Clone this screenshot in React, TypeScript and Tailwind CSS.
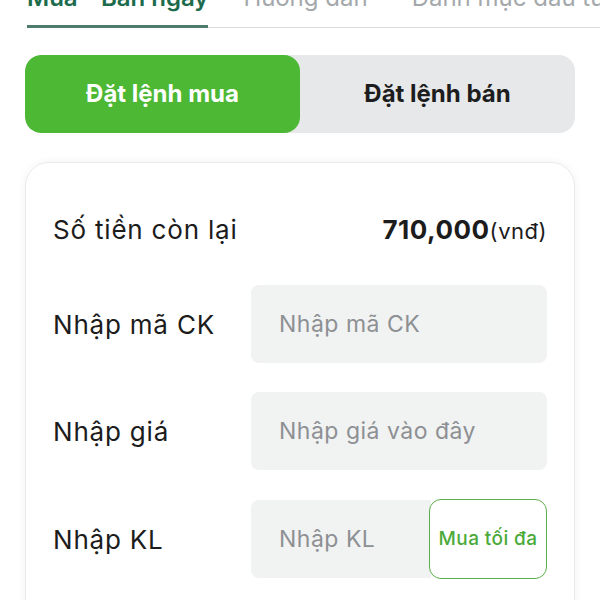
import React from "react";

export default function App() {
  return (
    <div className="w-[600px] h-[600px] overflow-hidden bg-white" style={{ fontFamily: "Inter, Roboto, sans-serif" }}>
      {/* tab bar */}
      <div className="mt-[-16px] ml-[27px] flex border-b border-[#dcdcdc] whitespace-nowrap">
        <div className="relative w-[185px] pb-[16px] text-[24px] leading-[27px] font-semibold text-[#1c6b4c]">
          Mua - Bán ngày
          <div className="absolute left-0 right-0 bottom-[-1px] h-[3px] bg-[#4e7b6c]" />
        </div>
        <div className="ml-[35px] pb-[16px] text-[24px] leading-[27px] text-[#a4a8ab]">Hướng dẫn</div>
        <div className="ml-[44px] pb-[16px] text-[24px] leading-[27px] text-[#a4a8ab]">Danh mục đầu tư</div>
      </div>

      {/* segmented control */}
      <div className="mx-[25px] mt-[27px] h-[78px] flex rounded-[16px] bg-[#e6e8e9] overflow-hidden">
        <div className="w-[275px] flex items-center justify-center rounded-[16px] bg-[#4cb834] text-white text-[24px] font-bold">
          Đặt lệnh mua
        </div>
        <div className="flex-1 flex items-center justify-center text-[#1d1d1d] text-[24px] font-bold">
          Đặt lệnh bán
        </div>
      </div>

      {/* card */}
      <div className="mx-[25px] mt-[29px] h-[500px] rounded-[24px] border border-[#ebebeb] shadow-[0_0_8px_rgba(0,0,0,0.06)] px-[27px] pt-[46px]">
        <div className="flex items-center justify-between h-[40px]">
          <span className="text-[26px] tracking-[0.8px] text-[#1c1c1c]">Số tiền còn lại</span>
          <span className="text-[#1c1c1c]">
            <span className="text-[26px] tracking-[0.5px] font-bold">710,000</span>
            <span className="text-[22px] tracking-[0.5px]">(vnđ)</span>
          </span>
        </div>

        <div className="mt-[36px] flex items-center">
          <span className="w-[198px] text-[26px] tracking-[0.8px] text-[#1c1c1c]">Nhập mã CK</span>
          <div className="flex-1 h-[78px] rounded-[8px] bg-[#f1f2f2] flex items-center pl-[28px] text-[23px] tracking-[0.5px] text-[#8d9092]">
            Nhập mã CK
          </div>
        </div>

        <div className="mt-[29px] flex items-center">
          <span className="w-[198px] text-[26px] tracking-[0.8px] text-[#1c1c1c]">Nhập giá</span>
          <div className="flex-1 h-[78px] rounded-[8px] bg-[#f1f2f2] flex items-center pl-[28px] text-[23px] tracking-[0.5px] text-[#8d9092]">
            Nhập giá vào đây
          </div>
        </div>

        <div className="mt-[29px] flex items-center">
          <span className="w-[198px] text-[26px] tracking-[0.8px] text-[#1c1c1c]">Nhập KL</span>
          <div className="flex-1 flex h-[80px] items-center">
            <div className="flex-1 h-[78px] rounded-l-[8px] bg-[#f1f2f2] flex items-center pl-[28px] text-[23px] tracking-[0.5px] text-[#8d9092]">
              Nhập KL
            </div>
            <div className="w-[118px] h-[80px] ml-[-2px] rounded-[12px] border-[1.5px] border-[#5cb04a] bg-white flex items-center justify-center text-[19px] tracking-[0.4px] font-medium text-[#4caa3a]">
              Mua tối đa
            </div>
          </div>
        </div>
      </div>
    </div>
  );
}
